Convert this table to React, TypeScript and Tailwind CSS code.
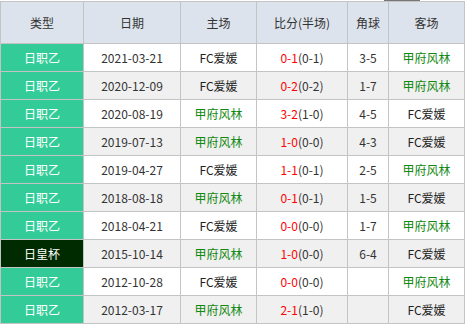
const rows = [
  ['日职乙', '2021-03-21', 'FC爱媛', '0-1', '(0-1)', '3-5', '甲府风林'],
  ['日职乙', '2020-12-09', 'FC爱媛', '0-2', '(0-2)', '1-7', '甲府风林'],
  ['日职乙', '2020-08-19', '甲府风林', '3-2', '(1-0)', '4-5', 'FC爱媛'],
  ['日职乙', '2019-07-13', '甲府风林', '1-0', '(0-0)', '4-3', 'FC爱媛'],
  ['日职乙', '2019-04-27', 'FC爱媛', '1-1', '(0-1)', '2-5', '甲府风林'],
  ['日职乙', '2018-08-18', '甲府风林', '0-1', '(0-1)', '1-5', 'FC爱媛'],
  ['日职乙', '2018-04-21', 'FC爱媛', '0-0', '(0-0)', '1-7', '甲府风林'],
  ['日皇杯', '2015-10-14', '甲府风林', '1-0', '(0-0)', '6-4', 'FC爱媛'],
  ['日职乙', '2012-10-28', 'FC爱媛', '0-0', '(0-0)', '', '甲府风林'],
  ['日职乙', '2012-03-17', '甲府风林', '2-1', '(1-0)', '', 'FC爱媛'],
]

const headers = ['类型', '日期', '主场', '比分(半场)', '角球', '客场']

function teamClass(name: string) {
  return name === '甲府风林' ? 'text-[#118811]' : 'text-[#222]'
}

export default function App() {
  return (
    <div
      className="relative w-[465px] h-[326px] bg-white overflow-hidden"
      style={{ fontFamily: '"Noto Sans CJK SC", "Noto Sans", sans-serif' }}
    >
      <div className="absolute left-[384px] top-0 w-[36px] h-px bg-[#777]" />
      <div className="mt-px grid grid-cols-[82px_96px_75px_90px_40px_75px] grid-rows-[41px_repeat(10,27px)] gap-px p-px bg-[#c4c4c4] text-[12px] text-[#333]">
        {headers.map((h) => (
          <div key={h} className="bg-[#dde3ec] flex items-center justify-center">
            {h}
          </div>
        ))}
        {rows.map((r, i) => {
          const bg = i % 2 === 1 ? 'bg-[#f0f0f0]' : 'bg-white'
          const cup = r[0] === '日皇杯'
          return [
            <div
              key={`${i}-t`}
              className={`flex items-center justify-center text-white ${cup ? 'bg-[#002b00]' : 'bg-[#33cc99]'}`}
            >
              {r[0]}
            </div>,
            <div key={`${i}-d`} className={`${bg} flex items-center justify-center`}>
              {r[1]}
            </div>,
            <div key={`${i}-h`} className={`${bg} flex items-center justify-center ${teamClass(r[2])}`}>
              {r[2]}
            </div>,
            <div key={`${i}-s`} className={`${bg} flex items-center justify-center`}>
              <span className="text-[#ff0000]">{r[3]}</span>
              <span>{r[4]}</span>
            </div>,
            <div key={`${i}-c`} className={`${bg} flex items-center justify-center`}>
              {r[5]}
            </div>,
            <div key={`${i}-a`} className={`${bg} flex items-center justify-center ${teamClass(r[6])}`}>
              {r[6]}
            </div>,
          ]
        })}
      </div>
    </div>
  )
}
